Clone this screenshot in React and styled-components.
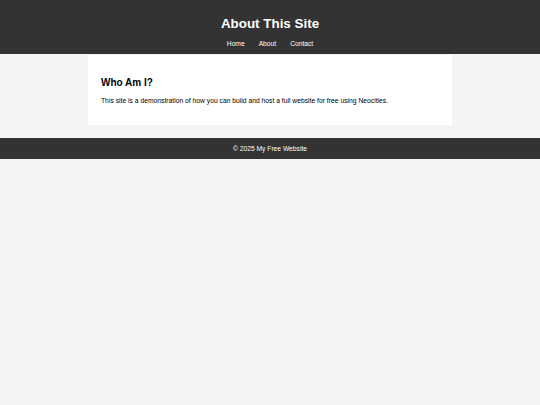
import React from "react";
import styled, { createGlobalStyle } from "styled-components";

const Global = createGlobalStyle`
  html, body { margin: 0; padding: 0; }
  body {
    background: #f4f4f4;
    font-family: "Liberation Sans", Arial, sans-serif;
    color: #000;
  }
`;

const Header = styled.header`
  background: #333;
  color: #fff;
  height: 54px;
  box-sizing: border-box;
  padding-top: 15px;
  text-align: center;
`;

const Title = styled.h1`
  margin: 0;
  font-size: 13.4px;
  line-height: 17px;
  font-weight: bold;
`;

const Nav = styled.nav`
  display: flex;
  justify-content: center;
  gap: 14px;
  margin-top: 7px;
`;

const NavLink = styled.a`
  color: #fff;
  text-decoration: none;
  font-size: 6.7px;
  line-height: 9px;
`;

const Main = styled.main`
  width: 364px;
  margin: 1px auto 13px;
  background: #fff;
  box-sizing: border-box;
  padding: 21px 13px 20px;
  height: 70px;
`;

const Heading = styled.h2`
  margin: 0 0 6.5px;
  font-size: 10px;
  line-height: 13px;
  font-weight: bold;
`;

const Para = styled.p`
  margin: 0;
  font-size: 6.75px;
  line-height: 9px;
`;

const Footer = styled.footer`
  background: #333;
  color: #fff;
  height: 21px;
  display: flex;
  align-items: center;
  justify-content: center;
  font-size: 6.7px;
`;

export default function App() {
  return (
    <>
      <Global />
      <Header>
        <Title>About This Site</Title>
        <Nav>
          <NavLink href="#">Home</NavLink>
          <NavLink href="#">About</NavLink>
          <NavLink href="#">Contact</NavLink>
        </Nav>
      </Header>
      <Main>
        <Heading>Who Am I?</Heading>
        <Para>
          This site is a demonstration of how you can build and host a full website for free using Neocities.
        </Para>
      </Main>
      <Footer>© 2025 My Free Website</Footer>
    </>
  );
}
